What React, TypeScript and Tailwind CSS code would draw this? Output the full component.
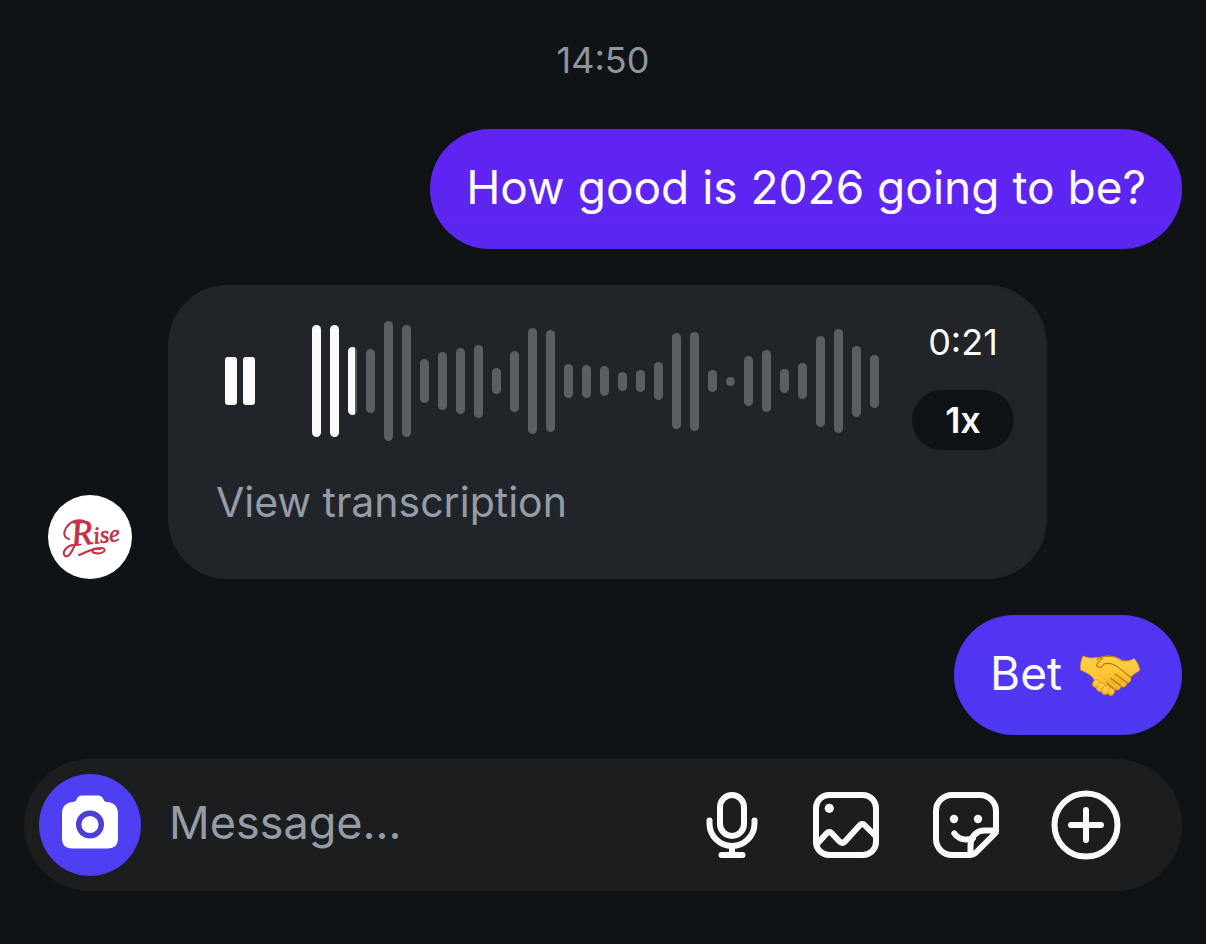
import React from "react";

const waveform = [
  112, 112, 68, 64, 120, 112, 44, 58, 66, 73, 26, 61, 106, 102, 34, 33, 30, 19,
  22, 38, 96, 99, 22, 9, 50, 62, 24, 36, 91, 104, 71, 53,
];

const PLAYED_BARS = 2;

function Waveform() {
  return (
    <div className="flex h-[120px] items-center gap-[9px]" aria-hidden="true">
      {waveform.map((height, i) => (
        <span
          key={i}
          className={
            i < PLAYED_BARS
              ? "w-[9px] rounded-full bg-[#f8fafc]"
              : i === PLAYED_BARS
                ? "w-[9px] rounded-full bg-linear-to-r from-[#f8fafc] from-75% to-[#5b5e62] to-75%"
                : "w-[9px] rounded-full bg-[#5b5e62]"
          }
          style={{ height }}
        />
      ))}
    </div>
  );
}

function RiseLogo() {
  return (
    <svg viewBox="0 0 84 84" className="size-[84px] shrink-0 rounded-full bg-white" role="img" aria-label="Rise">
      <g fill="none" stroke="#c42f45" strokeWidth="2" strokeLinecap="round" strokeLinejoin="round">
        <path d="M21 44C16 43 15 38 18 33C22 27 28 24 36 26" />
        <path d="M27 50C24 56 21 63 17 61C14 58 17 52 24 50" />
        <path d="M31 60C39 57 46 52 54 53C60 54 55 60 47 58C42 57 44 53 52 54" />
      </g>
      <text
        x="24"
        y="51"
        transform="rotate(-6 24 51)"
        fill="#c42f45"
        stroke="#c42f45"
        strokeWidth="0.7"
        className="font-['Liberation_Serif',serif] italic"
      >
        <tspan className="text-[36px]">R</tspan>
        <tspan className="text-[24px]">ise</tspan>
      </text>
    </svg>
  );
}

function Handshake() {
  return (
    <svg viewBox="0 -6 60 48" className="h-12 w-[60px]" role="img" aria-label="handshake">
      <defs>
        <linearGradient id="skin" x1="0" y1="0" x2="0" y2="1">
          <stop offset="0" stopColor="#fdd045" />
          <stop offset="0.6" stopColor="#fbc738" />
          <stop offset="1" stopColor="#f3ae26" />
        </linearGradient>
      </defs>
      <g fill="url(#skin)" stroke="#d98b16" strokeWidth="0.7" strokeLinejoin="round">
        <path d="M28 4C35 1 41 5 45 6C49 6 52 5 54 3.5C57 6 59 11 60 15C57 18 53 19 51 22L48 26L24 22Z" />
        <path d="M3 1C6 2 9 3 12 3C16 2 20 2 24 4L50 22C52 25 50 28 47 28C47 31 44 33 41 31.500C40 35 37 36 34 34C33 38 29 38 27 35L14 25C12 20 7 18 .5 15C0 10 1 5 3 1Z" />
        <rect x="13" y="24.500" width="7" height="8" rx="3.400" transform="rotate(30 16 28)" />
        <rect x="17" y="27" width="7" height="9.500" rx="3.400" transform="rotate(30 20 32)" />
        <rect x="22" y="30" width="7" height="9.500" rx="3.400" transform="rotate(25 25 35)" />
        <rect x="28" y="32.500" width="6.500" height="8" rx="3.200" transform="rotate(20 31 36)" />
      </g>
      <path
        fill="url(#skin)"
        d="M22 2C27 0 34 0 40 4L48 10L50 22L40 29L28 28L18 20L17 8Z"
      />
      <g fill="none" stroke="#b8730f" strokeWidth="1.200" strokeLinecap="round" strokeLinejoin="round">
        <path d="M17 4.500C20 1.500 26 .8 31 1.500C36 1.500 40 4 43 6" />
        <path d="M23 3C20 4 18 8 16.500 10C18 14 22 12.500 24 9C26 7.500 29 8.500 32 9C37 10 43 16 50 22" />
        <path d="M35 19L47 27.500" />
        <path d="M31 23.500L41 31" />
        <path d="M27 28L34 34" />
      </g>
    </svg>
  );
}

function CameraIcon() {
  return (
    <svg viewBox="0 0 60 60" className="size-[60px]" aria-hidden="true">
      <path
        fill="#fff"
        d="M23 .500H37C41 .500 42.500 2 43.500 4.500C44.200 6.400 45 6.700 47 7C54 7.300 58 11.500 58 19V43C58 50 54.500 53.500 47.500 53.500H12.500C5.500 53.500 2 50 2 43V19C2 11.500 6 7.300 13 7C15 6.700 15.800 6.400 16.500 4.500C17.500 2 19 .500 23 .500Z"
      />
      <circle cx="30" cy="29.500" r="11.300" fill="none" stroke="#4c40d8" strokeWidth="5.400" />
    </svg>
  );
}

const stroke = {
  fill: "none",
  stroke: "#fafafa",
  strokeWidth: 6,
  strokeLinecap: "round",
  strokeLinejoin: "round",
} as const;

function MicIcon() {
  return (
    <svg viewBox="0 0 60 72" className="h-[72px] w-[60px]" aria-hidden="true" {...stroke}>
      <rect x="18" y="6" width="24" height="41" rx="12" />
      <path d="M7.500 31.500V34.500A22.500 22.500 0 0 0 52.500 34.500V31.500M30 57V66M19.500 66H40.500" />
    </svg>
  );
}

function ImageIcon() {
  return (
    <svg viewBox="0 0 72 72" className="size-[72px]" aria-hidden="true" {...stroke}>
      <rect x="6" y="6" width="60" height="60" rx="13" />
      <path d="M7 55L16.500 44.500Q19.300 41.500 22 44.500L29.500 52.500Q32.300 55 35 52.500L49.500 36.500Q52.300 33.500 55 36.500L65 46.500" />
      <circle cx="19.300" cy="19.300" r="4.600" fill="#fafafa" stroke="none" />
    </svg>
  );
}

function StickerIcon() {
  return (
    <svg viewBox="0 0 72 72" className="size-[72px]" aria-hidden="true" {...stroke}>
      <path d="M66 43V22A16 16 0 0 0 50 6H22A16 16 0 0 0 6 22V50A16 16 0 0 0 22 66H40.500Q43.500 66 45.500 64L64.500 45Q66 43.500 66 41.500H55C46 41.500 40.500 48 40.500 57V65" />
      <path d="M24.300 44.500C27 48 31 50.500 36 50.500Q40 50.500 43 49" />
      <circle cx="24" cy="30" r="4.200" fill="#fafafa" stroke="none" />
      <circle cx="48" cy="30" r="4.200" fill="#fafafa" stroke="none" />
    </svg>
  );
}

function PlusIcon() {
  return (
    <svg viewBox="0 0 72 72" className="size-[72px]" aria-hidden="true" {...stroke}>
      <circle cx="36" cy="36" r="31.500" />
      <path d="M36 21V51M21 36H51" />
    </svg>
  );
}

export default function App() {
  return (
    <main className="flex min-h-screen flex-col bg-[#0f1316] px-6 pt-9 pb-[54px] font-['Inter','Liberation_Sans',sans-serif] text-[#fafafa]">
      <time className="mb-[45px] self-center text-[36px] leading-[48px] text-[#8e959f]">14:50</time>

      <section aria-label="Messages" className="flex flex-col gap-9">
        <p className="self-end rounded-[60px] bg-linear-to-b from-[#6023f2] to-[#5c27f2] px-9 pt-[28px] pb-[32px] text-[46px] leading-[60px]">
          How good is 2026 going to be?
        </p>

        <div className="flex items-end gap-9 self-start pl-6">
          <RiseLogo />
          <article className="rounded-[60px] bg-[#212429] pt-9 pr-[33px] pb-[53px] pl-12">
            <div className="flex items-start">
              <button
                type="button"
                aria-label="Pause"
                className="mr-12 flex h-[120px] w-12 items-center justify-center gap-[6px]"
              >
                <span className="h-12 w-3 rounded-[3px] bg-[#fafafa]" />
                <span className="h-12 w-3 rounded-[3px] bg-[#fafafa]" />
              </button>
              <Waveform />
              <div className="ml-[33px] flex w-[102px] flex-col items-center gap-[27px]">
                <span className="text-[36px] leading-[42px]">0:21</span>
                <button
                  type="button"
                  aria-label="Playback speed 1x"
                  className="h-[60px] w-full rounded-full bg-[#0f1316] text-[36px] leading-[60px] font-semibold"
                >
                  1x
                </button>
              </div>
            </div>
            <button type="button" className="mt-7 block text-[41px] leading-[48px] text-[#959ca8]">
              View transcription
            </button>
          </article>
        </div>

        <p className="flex items-center gap-[18px] self-end rounded-[60px] bg-linear-to-b from-[#5333f2] to-[#4e39f2] pt-[28px] pr-[42px] pb-[32px] pl-9 text-[46px] leading-[60px]">
          Bet
          <Handshake />
        </p>
      </section>

      <form
        className="mt-6 flex h-[132px] items-center rounded-full bg-[#1c1d1f] pr-[60px] pl-[15px]"
        onSubmit={(e) => e.preventDefault()}
      >
        <button
          type="button"
          aria-label="Camera"
          className="flex size-[102px] shrink-0 items-center justify-center rounded-full bg-[#4e3ff2]"
        >
          <CameraIcon />
        </button>
        <input
          type="text"
          aria-label="Message"
          placeholder="Message..."
          className="ml-7 min-w-0 flex-1 bg-transparent pb-1 text-[45px] leading-[60px] outline-none placeholder:text-[#959ca5]"
        />
        <div className="flex shrink-0 items-center gap-12">
          <button type="button" aria-label="Record voice message">
            <MicIcon />
          </button>
          <button type="button" aria-label="Choose photo">
            <ImageIcon />
          </button>
          <button type="button" aria-label="Stickers">
            <StickerIcon />
          </button>
          <button type="button" aria-label="More">
            <PlusIcon />
          </button>
        </div>
      </form>
    </main>
  );
}
